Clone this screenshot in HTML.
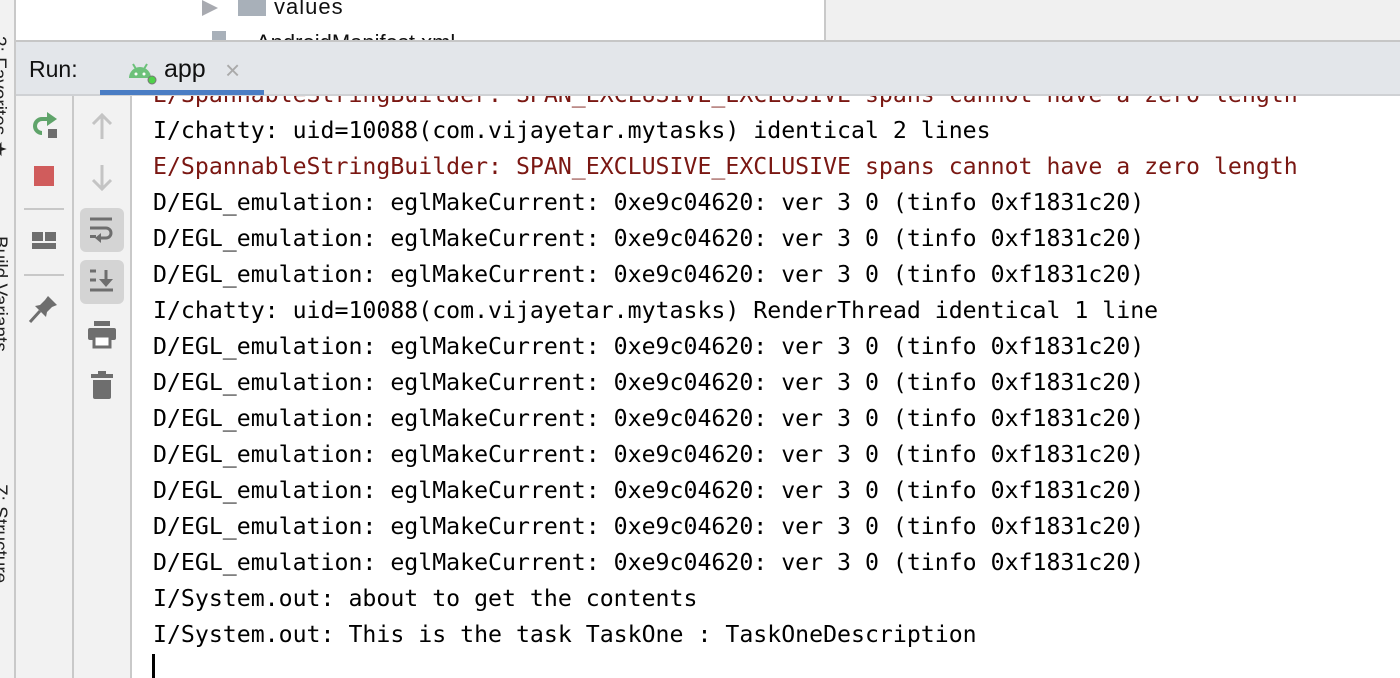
<!DOCTYPE html>
<html><head><meta charset="utf-8"><style>
*{margin:0;padding:0;box-sizing:border-box}
body{width:1400px;height:678px;overflow:hidden;background:#fff;position:relative;font-family:"Liberation Sans",sans-serif}
.a{position:absolute}
.vt{position:absolute;transform:rotate(90deg);transform-origin:left top;font-size:19px;color:#222;white-space:nowrap}
.mono{font-family:"DejaVu Sans Mono","Liberation Mono",monospace;font-size:23.2px;line-height:36px;white-space:pre;color:#000}
.r{color:#7a1712}
</style></head><body>
<div class="a" style="left:0;top:0;width:15px;height:678px;background:#f2f2f2;overflow:hidden">
 <div class="vt" style="top:36px;left:10px">2: Favorites ★</div>
 <div class="vt" style="top:236px;left:10px">Build Variants</div>
 <div class="vt" style="top:484px;left:10px">Z: Structure</div>
</div>
<div class="a" style="left:14px;top:0;width:2px;height:678px;background:#c9c9c9"></div>
<div class="a" style="left:16px;top:0;width:808px;height:40px;background:#fff;overflow:hidden">
 <div class="a" style="left:186px;top:0;width:0;height:0;border-left:16px solid #a8aab0;border-top:8px solid transparent;border-bottom:8px solid transparent"></div>
 <div class="a" style="left:222px;top:0;width:28px;height:16px;background:#a8b0b9"></div>
 <div class="a" style="left:258px;top:-6px;font-size:22px;letter-spacing:1px;color:#111">values</div>
 <div class="a" style="left:196px;top:31px;width:14px;height:10px;background:#a8b0b9"></div>
 <div class="a" style="left:240px;top:30px;font-size:22px;color:#111">AndroidManifest.xml</div>
</div>
<div class="a" style="left:824px;top:0;width:2px;height:40px;background:#c9c9c9"></div>
<div class="a" style="left:826px;top:0;width:574px;height:40px;background:#f0f0f0"></div>
<div class="a" style="left:16px;top:40px;width:1384px;height:2px;background:#c6c6c6"></div>
<div class="a" style="left:16px;top:42px;width:1384px;height:52px;background:#e3e6ea"></div>
<div class="a" style="left:16px;top:94px;width:1384px;height:2px;background:#cfd1d4"></div>
<div class="a" style="left:29px;top:56px;font-size:23px;color:#111">Run:</div>
<svg class="a" style="left:126px;top:58px" width="32" height="28" viewBox="0 0 32 28">
 <path d="M3 20a11 11 0 0 1 22 0z" fill="#6cc17a"/>
 <line x1="7" y1="6" x2="10" y2="11" stroke="#6cc17a" stroke-width="2"/>
 <line x1="21" y1="6" x2="18" y2="11" stroke="#6cc17a" stroke-width="2"/>
 <circle cx="10" cy="16" r="1.5" fill="#fff"/><circle cx="18" cy="16" r="1.5" fill="#fff"/>
 <circle cx="26" cy="22" r="4" fill="#4fd14a" stroke="#777" stroke-width="1"/>
</svg>
<div class="a" style="left:164px;top:55px;font-size:25px;color:#111">app</div>
<div class="a" style="left:225px;top:55px;font-size:26px;color:#aaa">×</div>
<div class="a" style="left:100px;top:90px;width:164px;height:5px;background:#4a7dc4"></div>
<div class="a" style="left:16px;top:96px;width:56px;height:582px;background:#f2f2f2"></div>
<div class="a" style="left:72px;top:96px;width:2px;height:582px;background:#c9c9c9"></div>
<div class="a" style="left:74px;top:96px;width:56px;height:582px;background:#f2f2f2"></div>
<div class="a" style="left:130px;top:96px;width:2px;height:582px;background:#c9c9c9"></div>
<svg class="a" style="left:30px;top:110px" width="30" height="30" viewBox="0 0 30 30">
 <path d="M20 9H12a7 7 0 0 0 0 14" fill="none" stroke="#5fa46a" stroke-width="4"/>
 <path d="M17 2l10 7-10 7z" fill="#5fa46a"/>
 <rect x="18" y="19" width="9" height="9" fill="#6e6e6e"/>
</svg>
<div class="a" style="left:34px;top:166px;width:20px;height:20px;background:#d05c5c"></div>
<div class="a" style="left:24px;top:208px;width:40px;height:2px;background:#c8c8c8"></div>
<div class="a" style="left:32px;top:232px;width:11px;height:9px;background:#6e6e6e"></div>
<div class="a" style="left:45px;top:232px;width:11px;height:9px;background:#6e6e6e"></div>
<div class="a" style="left:32px;top:243px;width:24px;height:6px;background:#6e6e6e"></div>
<div class="a" style="left:24px;top:274px;width:40px;height:2px;background:#c8c8c8"></div>
<svg class="a" style="left:28px;top:292px" width="32" height="32" viewBox="0 0 32 32">
 <path d="M20 4l9 9-5 2-5 5-1 5-11-11 5-1 5-5z" fill="#6e6e6e"/>
 <path d="M12 19L2 30" stroke="#6e6e6e" stroke-width="3"/>
</svg>
<svg class="a" style="left:90px;top:112px" width="24" height="28" viewBox="0 0 24 28"><path d="M12 3v24M3 12l9-9 9 9" fill="none" stroke="#c4c4c4" stroke-width="3"/></svg>
<svg class="a" style="left:90px;top:164px" width="24" height="28" viewBox="0 0 24 28"><path d="M12 1v24M3 16l9 9 9-9" fill="none" stroke="#c4c4c4" stroke-width="3"/></svg>
<div class="a" style="left:80px;top:208px;width:44px;height:44px;background:#d4d4d4;border-radius:6px"></div>
<svg class="a" style="left:88px;top:216px" width="28" height="28" viewBox="0 0 28 28">
 <path d="M2 3h22M2 12h16a5 5 0 0 1 0 10h-6" fill="none" stroke="#6e6e6e" stroke-width="3"/>
 <path d="M13 17l-6 5 6 5z" fill="#6e6e6e"/><rect x="2" y="19" width="6" height="3" fill="#6e6e6e"/>
</svg>
<div class="a" style="left:80px;top:260px;width:44px;height:44px;background:#d4d4d4;border-radius:6px"></div>
<svg class="a" style="left:88px;top:268px" width="28" height="28" viewBox="0 0 28 28">
 <path d="M2 3h6M2 12h6M2 22h23M18 2v14" fill="none" stroke="#6e6e6e" stroke-width="3"/>
 <path d="M11 11l7 8 7-8z" fill="#6e6e6e"/>
</svg>
<svg class="a" style="left:86px;top:320px" width="32" height="30" viewBox="0 0 32 30">
 <rect x="8" y="1" width="16" height="5" fill="#6e6e6e"/>
 <rect x="2" y="8" width="28" height="12" rx="2" fill="#6e6e6e"/>
 <rect x="8" y="16" width="16" height="11" fill="#fff" stroke="#6e6e6e" stroke-width="3"/>
</svg>
<svg class="a" style="left:90px;top:370px" width="24" height="30" viewBox="0 0 24 30">
 <rect x="8" y="1" width="8" height="3" fill="#6e6e6e"/><rect x="1" y="4" width="22" height="4" fill="#6e6e6e"/>
 <path d="M3 10h18v17a2 2 0 0 1-2 2H5a2 2 0 0 1-2-2z" fill="#6e6e6e"/>
</svg>
<div class="a" style="left:132px;top:96px;width:1268px;height:582px;overflow:hidden;background:#fff">
<div class="mono" style="position:absolute;left:21px;top:-19px"><span class="r">E/SpannableStringBuilder: SPAN_EXCLUSIVE_EXCLUSIVE spans cannot have a zero length</span>
I/chatty: uid=10088(com.vijayetar.mytasks) identical 2 lines
<span class="r">E/SpannableStringBuilder: SPAN_EXCLUSIVE_EXCLUSIVE spans cannot have a zero length</span>
D/EGL_emulation: eglMakeCurrent: 0xe9c04620: ver 3 0 (tinfo 0xf1831c20)
D/EGL_emulation: eglMakeCurrent: 0xe9c04620: ver 3 0 (tinfo 0xf1831c20)
D/EGL_emulation: eglMakeCurrent: 0xe9c04620: ver 3 0 (tinfo 0xf1831c20)
I/chatty: uid=10088(com.vijayetar.mytasks) RenderThread identical 1 line
D/EGL_emulation: eglMakeCurrent: 0xe9c04620: ver 3 0 (tinfo 0xf1831c20)
D/EGL_emulation: eglMakeCurrent: 0xe9c04620: ver 3 0 (tinfo 0xf1831c20)
D/EGL_emulation: eglMakeCurrent: 0xe9c04620: ver 3 0 (tinfo 0xf1831c20)
D/EGL_emulation: eglMakeCurrent: 0xe9c04620: ver 3 0 (tinfo 0xf1831c20)
D/EGL_emulation: eglMakeCurrent: 0xe9c04620: ver 3 0 (tinfo 0xf1831c20)
D/EGL_emulation: eglMakeCurrent: 0xe9c04620: ver 3 0 (tinfo 0xf1831c20)
D/EGL_emulation: eglMakeCurrent: 0xe9c04620: ver 3 0 (tinfo 0xf1831c20)
I/System.out: about to get the contents
I/System.out: This is the task TaskOne : TaskOneDescription</div>
<div class="a" style="left:20px;top:558px;width:3px;height:24px;background:#000"></div>
</div>
</body></html>
